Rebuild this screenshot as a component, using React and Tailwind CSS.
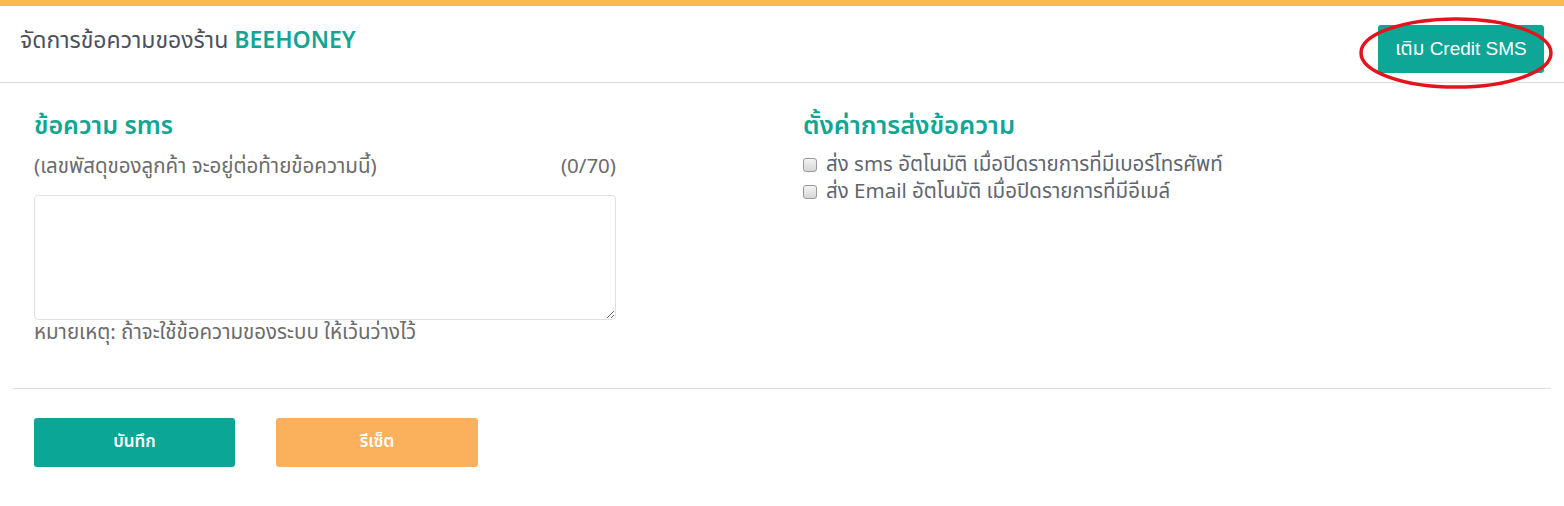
const font = { fontFamily: '"Noto Sans Thai", "Noto Sans", "Liberation Sans", sans-serif' };

const Check = ({ label }) => (
  <label className="flex items-center gap-[9px] text-[20.5px] leading-[27px] text-[#5f6670]">
    <span className="w-[14px] h-[14px] rounded-[3px] border border-[#9a9a9a] bg-gradient-to-b from-[#f4f4f4] to-[#d6d6d6] shrink-0" />
    <span>{label}</span>
  </label>
);

const App = () => {
  return (
    <div className="w-[1564px] h-[506px] bg-white" style={font}>
      <div className="h-[6px] bg-[#fdb94d]" />
      <div className="relative flex justify-between items-start h-[77px] border-b border-[#dcdcdc] pl-[20px] pr-[20px]">
        <div className="mt-[19px] text-[23px] leading-[32px] text-[#4c515c]">
          จัดการข้อความของร้าน <span className="font-semibold text-[#12a594]">BEEHONEY</span>
        </div>
        <button className="mt-[19px] w-[166px] h-[48px] rounded-[3px] bg-[#0ea696] text-white text-[19px]" style={{ fontFamily: '"Liberation Sans", "Noto Sans Thai", sans-serif' }}>
          เติม Credit SMS
        </button>
        {/* red circle annotation */}
        <svg className="absolute right-[10px] top-[9px]" width="196" height="76" viewBox="0 0 196 76">
          <ellipse cx="98" cy="38" rx="95" ry="34" fill="none" stroke="#e3141c" strokeWidth="3.5" />
        </svg>
      </div>

      <div className="flex px-[34px] pt-[26px]">
        <div className="w-[582px]">
          <div className="text-[25px] leading-[34px] font-semibold text-[#12a594]">ข้อความ sms</div>
          <div className="flex justify-between mt-[10px] text-[20.5px] leading-[28px] text-[#6b6b6b]">
            <span>(เลขพัสดุของลูกค้า จะอยู่ต่อท้ายข้อความนี้)</span>
            <span>(0/70)</span>
          </div>
          <textarea className="block mt-[14px] w-full h-[125px] rounded-[4px] border border-[#e0e0e0] outline-none" />
          <div className="text-[20.5px] leading-[26px] text-[#6b6b6b]">หมายเหตุ: ถ้าจะใช้ข้อความของระบบ ให้เว้นว่างไว้</div>
        </div>
        <div className="ml-[187px]">
          <div className="text-[25.5px] leading-[34px] font-semibold text-[#12a594]">ตั้งค่าการส่งข้อความ</div>
          <div className="mt-[8px]">
            <Check label="ส่ง sms อัตโนมัติ เมื่อปิดรายการที่มีเบอร์โทรศัพท์" />
            <Check label="ส่ง Email อัตโนมัติ เมื่อปิดรายการที่มีอีเมล์" />
          </div>
        </div>
      </div>

      <div className="mx-[13px] mt-[42px] border-t border-[#dedede]" />

      <div className="flex gap-[41px] px-[34px] pt-[29px]">
        <button className="w-[201px] h-[49px] rounded-[3px] bg-[#0ba696] text-white text-[17px] font-semibold">บันทึก</button>
        <button className="w-[202px] h-[49px] rounded-[3px] bg-[#fbb05c] text-white text-[17px] font-semibold">รีเซ็ต</button>
      </div>
    </div>
  );
};

export default App;
